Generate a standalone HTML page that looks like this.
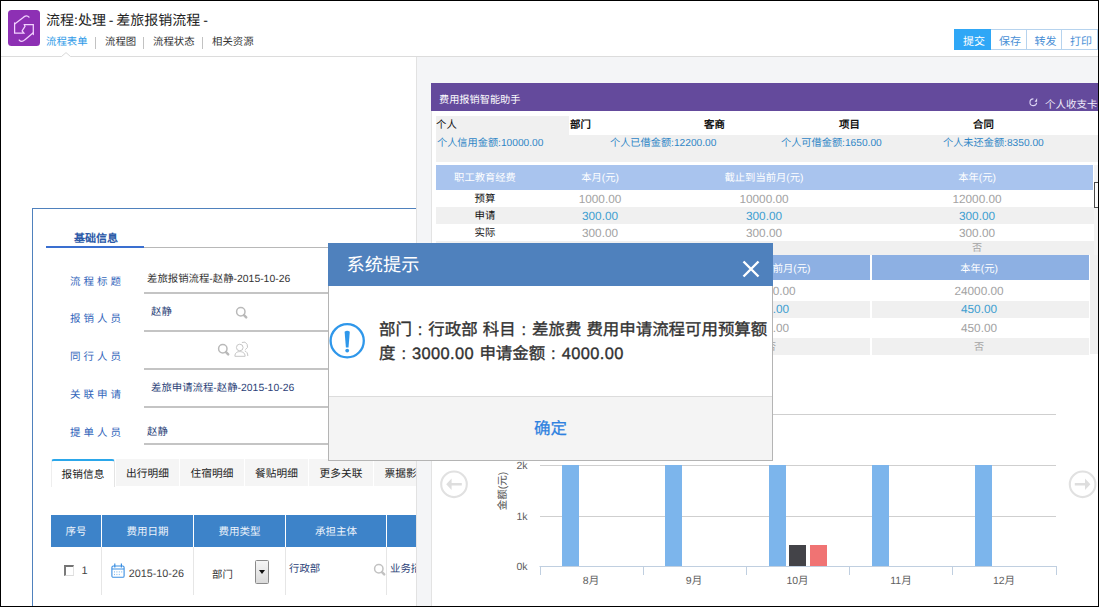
<!DOCTYPE html>
<html lang="zh-CN">
<head>
<meta charset="utf-8">
<title>流程:处理 - 差旅报销流程</title>
<style>
*{box-sizing:border-box;margin:0;padding:0}
html,body{width:1099px;height:607px;overflow:hidden;background:#fff}
body{font-family:"Liberation Sans",sans-serif;font-size:12px;color:#222;position:relative;text-rendering:geometricPrecision}
.fc{display:inline-block;width:1em;text-align:center}
.abs{position:absolute}
.t{position:absolute;white-space:nowrap;line-height:1}
#frame{position:absolute;left:0;top:0;width:1099px;height:607px;border:1px solid #000;z-index:100;pointer-events:none}
/* header */
#logo{left:8px;top:10px;width:32px;height:36px;background:#8d30b4;border-radius:3.5px}
#hline{left:1px;top:56px;width:1097px;height:1px;background:#dcdcdc}
.btn{position:absolute;top:29px;height:21px;border:1px solid #b6d3ee;border-left:none;background:#fff;color:#4a90d6;font-size:11px;line-height:24px;text-align:center;padding-left:3px}
/* right */
#rbg{left:417px;top:57px;width:681px;height:549px;background:#f4f5f7}
#rline{left:416px;top:57px;width:1px;height:549px;background:#e2e2e2}
#rpanel{left:431px;top:83px;width:667px;height:523px;background:#fff;border-left:1px solid #e3e3e3}
#purple{left:431px;top:83px;width:667px;height:28px;background:#644a9c}
.g{position:absolute;background:#f0f0f0}
.c{position:absolute;white-space:nowrap;line-height:1;transform:translateX(-50%)}
/* left */
#lpanel{left:32px;top:208px;width:400px;height:420px;border:1px solid #4f81bd;background:#fff}
.lab{position:absolute;left:70px;color:#3366bb;font-size:10.5px;letter-spacing:3px;white-space:nowrap;line-height:1}
.ul{position:absolute;left:144px;width:190px;height:2px;background:#c4c4c4}
.tab{position:absolute;top:459px;height:27px;background:#f5f5f5;font-size:10.7px;line-height:31px;text-align:center;color:#222}
.th{position:absolute;top:515px;height:32px;background:#3d83c9;color:#eef4fb;font-size:10.5px;line-height:34px;text-align:center}
.vs{position:absolute;top:547px;width:1px;height:48px;background:#e6e6e6}
.lk{font-size:10.2px;color:#2f86c6}
.h1{font-size:10.3px;color:#fff;margin-top:1.5px}
.rl{font-size:10.4px;color:#111;margin-top:1px}
.nm{font-size:11.8px;color:#a3a3a3;margin-top:1.2px}
.nm.b{color:#3f9fd0}
/* dialog */
#dlg{left:328px;top:243px;width:445px;height:218px;background:#fff;border:1px solid #b4b4b4;z-index:50}
#dtitle{left:-1px;top:-1px;width:445px;height:42.5px;background:#4f81bd}
#dfoot{left:0;top:152px;width:443px;height:64px;background:#f4f4f4;border-top:1px solid #dcdcdc}
</style>
</head>
<body>
<!-- header -->
<div class="abs" id="logo"><svg width="32" height="36" viewBox="0 0 32 36"><g fill="none" stroke="#f3d3ff" stroke-width="1.25" stroke-linejoin="miter" stroke-linecap="round">
<path d="M21 7.2C19.6 5.2 17 5.4 15.2 7.5L7 13.8"/>
<path d="M6.6 12.8V23.2H15.9L14.1 21L17 16.4L16.3 14.5H25.3V24.6"/>
<path d="M11.2 30C12.7 32 15.2 31.8 17 29.7L25.2 22.8"/>
</g></svg></div>
<div class="t" style="left:46px;top:12.5px;font-size:14px;color:#222;word-spacing:-1px">流程:处理 - 差旅报销流程 -</div>
<div class="t" style="left:46px;top:38.3px;font-size:10.4px;color:#2f9be8">流程表单</div>
<div class="t" style="left:105px;top:38.3px;font-size:10.4px;color:#333">流程图</div>
<div class="t" style="left:153px;top:38.3px;font-size:10.4px;color:#333">流程状态</div>
<div class="t" style="left:212px;top:38.3px;font-size:10.4px;color:#333">相关资源</div>
<div class="abs" style="left:95px;top:37px;width:1px;height:12px;background:#c2c2c2"></div>
<div class="abs" style="left:143px;top:37px;width:1px;height:12px;background:#c2c2c2"></div>
<div class="abs" style="left:202px;top:37px;width:1px;height:12px;background:#c2c2c2"></div>
<div class="abs" id="hline"></div>
<svg class="abs" style="left:60px;top:51px" width="12" height="7" viewBox="0 0 12 7"><path d="M1 5.5L6 1.3L11 5.5V7H1Z" fill="#fff"/><path d="M0.5 5.5H1.5L6 1.6L10.5 5.5H11.5" fill="none" stroke="#d9d9d9" stroke-width="1"/></svg>
<div class="btn" style="left:954px;width:37px;background:#2fa7f6;border-color:#2fa7f6;color:#fff;border-left:1px solid #2fa7f6">提交</div>
<div class="btn" style="left:991px;width:36px">保存</div>
<div class="btn" style="left:1027px;width:35px">转发</div>
<div class="btn" style="left:1062px;width:36px">打印</div>

<!-- right background -->
<div class="abs" id="rbg"></div>
<div class="abs" id="rline"></div>

<!-- left panel -->
<div class="abs" id="lpanel"></div>
<!-- section title -->
<div class="t" style="left:74px;top:233.5px;font-size:11px;font-weight:bold;color:#2c5aa8">基础信息</div>
<div class="abs" style="left:46px;top:247px;width:370px;height:1px;background:#b8b8b8"></div>
<div class="abs" style="left:46px;top:246px;width:98px;height:2px;background:#3a6fd0"></div>
<!-- form rows -->
<div class="lab" style="top:276.5px">流程标题</div>
<div class="t" style="left:147px;top:275px;font-size:10.4px;color:#333">差旅报销流程-赵静-2015-10-26</div>
<div class="ul" style="top:292px"></div>
<div class="lab" style="top:313.5px">报销人员</div>
<div class="t" style="left:151px;top:307.5px;font-size:10.4px;color:#2b3f78">赵静</div>
<svg class="abs" style="left:235px;top:305.5px" width="14" height="14" viewBox="0 0 14 14"><circle cx="5.8" cy="5.8" r="4.2" fill="none" stroke="#b9b9b9" stroke-width="1.5"/><path d="M9 9.2L11.2 11.3" stroke="#b9b9b9" stroke-width="2.5" stroke-linecap="round"/></svg>
<div class="ul" style="top:330px"></div>
<div class="lab" style="top:351.5px">同行人员</div>
<svg class="abs" style="left:217.1px;top:342.9px" width="14" height="14" viewBox="0 0 14 14"><circle cx="5.8" cy="5.8" r="4.2" fill="none" stroke="#b9b9b9" stroke-width="1.5"/><path d="M9 9.2L11.2 11.3" stroke="#b9b9b9" stroke-width="2.5" stroke-linecap="round"/></svg>
<svg class="abs" style="left:233px;top:340px" width="17" height="18" viewBox="0 0 17 18"><g fill="none" stroke="#c6c6c6" stroke-width="1"><path d="M8.9 2.5A3.6 3.6 0 0 1 12.3 9.6M11.8 10.9C13.6 11.6 14.8 13 14.8 16"/><circle cx="6.75" cy="7.5" r="3.3" fill="#fff"/><path d="M1.9 16.3C1.9 12.6 4.3 11.6 6.75 11.6C9.2 11.6 12.1 12.6 12.1 16.3Z" fill="#fff"/></g></svg>
<div class="ul" style="top:368px"></div>
<div class="lab" style="top:389.5px">关联申请</div>
<div class="t" style="left:151px;top:384px;font-size:10.4px;color:#2b3f78">差旅申请流程-赵静-2015-10-26</div>
<div class="ul" style="top:406px"></div>
<div class="lab" style="top:427.5px">提单人员</div>
<div class="t" style="left:147px;top:428px;font-size:10.4px;color:#2b3f78">赵静</div>
<div class="ul" style="top:443px"></div>
<!-- tabs -->
<div class="tab" style="left:51px;width:64px;top:459px;height:28px;background:#fff;border-top:2px solid #2ba7ea;border-radius:3px 3px 0 0;line-height:28px;border-left:1px solid #eee;border-right:1px solid #e4e4e4">报销信息</div>
<div class="tab" style="left:116px;width:63px">出行明细</div>
<div class="tab" style="left:180px;width:64px">住宿明细</div>
<div class="tab" style="left:245px;width:63px">餐贴明细</div>
<div class="tab" style="left:309px;width:64px">更多关联</div>
<div class="tab" style="left:374px;width:64px">票据影像</div>
<!-- table -->
<div class="th" style="left:51px;width:50px">序号</div>
<div class="th" style="left:102px;width:91px">费用日期</div>
<div class="th" style="left:194px;width:91px">费用类型</div>
<div class="th" style="left:286px;width:100px">承担主体</div>
<div class="th" style="left:387px;width:60px"></div>
<div class="vs" style="left:101px"></div><div class="vs" style="left:193px"></div><div class="vs" style="left:285px"></div><div class="vs" style="left:386px"></div>
<div class="abs" style="left:64px;top:565px;width:10px;height:11px;border-top:2px solid #737373;border-left:2px solid #7a7a7a;border-right:1px solid #e2e2e2;border-bottom:1px solid #dcdcdc;background:#fff"></div>
<div class="t" style="left:81.5px;top:566px;font-size:11px;color:#444">1</div>
<svg class="abs" style="left:110.5px;top:562.5px" width="14" height="15" viewBox="0 0 14 15"><rect x="0.9" y="3" width="12.2" height="11.3" rx="1.4" fill="#fff" stroke="#3b8fe2" stroke-width="1.1"/><path d="M0.9 6H13.1" stroke="#3b8fe2" stroke-width="1"/><path d="M3.8 0.5V4.4M10.4 0.5V4.4" stroke="#3b8fe2" stroke-width="1.2"/><g fill="#86bdf0"><rect x="3" y="8.3" width="1" height="1.2"/><rect x="5.4" y="8.3" width="1" height="1.2"/><rect x="7.8" y="8.3" width="1" height="1.2"/><rect x="10.2" y="8.3" width="1" height="1.2"/><rect x="3" y="10.9" width="1" height="1.2"/><rect x="5.4" y="10.9" width="1" height="1.2"/><rect x="7.8" y="10.9" width="1" height="1.2"/></g></svg>
<div class="t" style="left:128.7px;top:568.6px;font-size:10.8px;color:#444">2015-10-26</div>
<div class="t" style="left:212px;top:570.6px;font-size:10.4px;color:#333">部门</div>
<div class="abs" style="left:255px;top:560px;width:14px;height:24px;border:1px solid #8a8a8a;border-radius:1.5px;background:linear-gradient(#f5f5f5,#dadada)"></div>
<div class="abs" style="left:259px;top:570px;width:0;height:0;border-left:3px solid transparent;border-right:3px solid transparent;border-top:4px solid #111"></div>
<div class="t" style="left:289px;top:565px;font-size:10.4px;color:#2b3f78">行政部</div>
<svg class="abs" style="left:373px;top:563px" width="14" height="14" viewBox="0 0 14 14"><circle cx="5.8" cy="5.8" r="4.2" fill="none" stroke="#c2c2c2" stroke-width="1.5"/><path d="M9 9.2L11.2 11.3" stroke="#c2c2c2" stroke-width="2.5" stroke-linecap="round"/></svg>
<div class="t" style="left:390px;top:564.5px;font-size:10.4px;color:#2b3f78">业务招待</div>
<!-- cover strip right of left panel -->
<div class="abs" style="left:416px;top:57px;width:16px;height:549px;background:#f4f5f7;border-left:1px solid #e2e2e2"></div>

<!-- right panel -->
<div class="abs" id="rpanel"></div>
<div class="abs" id="purple"></div>
<div class="t" style="left:439px;top:95.5px;font-size:10.2px;color:#fff">费用报销智能助手</div>
<svg class="abs" style="left:1027.7px;top:97.4px" width="10.6" height="10.6" viewBox="0 0 11 11"><path d="M5.6 2A3.5 3.5 0 1 0 9 6" fill="none" stroke="#ddd5f5" stroke-width="1.15"/><path d="M6.9 4.9H9.5V1Z" fill="#e6e0f8"/></svg>
<div class="abs" style="left:1040px;top:96px;width:58px;height:15px;overflow:hidden"><div class="t" style="left:5px;top:4px;font-size:10.5px;color:#f2eefb">个人收支卡片</div></div>
<!-- type row -->
<div class="g" style="left:436px;top:116px;width:133px;height:19px"></div>
<div class="t" style="left:436px;top:120.5px;font-size:10.4px;color:#111">个人</div>
<div class="t" style="left:570px;top:120.5px;font-size:10.4px;color:#111;font-weight:bold">部门</div>
<div class="t" style="left:704px;top:120.5px;font-size:10.4px;color:#111;font-weight:bold">客商</div>
<div class="t" style="left:839px;top:120.5px;font-size:10.4px;color:#111;font-weight:bold">项目</div>
<div class="t" style="left:973px;top:120.5px;font-size:10.4px;color:#111;font-weight:bold">合同</div>
<div class="g" style="left:436px;top:135px;width:662px;height:27px"></div>
<div class="t lk" style="left:437px;top:138.7px">个人信用金额:10000.00</div>
<div class="t lk" style="left:610px;top:138.7px">个人已借金额:12200.00</div>
<div class="t lk" style="left:781px;top:138.7px">个人可借金额:1650.00</div>
<div class="t lk" style="left:943px;top:138.7px">个人未还金额:8350.00</div>
<!-- table 1 -->
<div class="abs" style="left:436px;top:165px;width:657px;height:25px;background:#a9c4ee"></div>
<div class="c h1" style="left:485px;top:172px">职工教育经费</div>
<div class="c h1" style="left:600px;top:172px">本月(元)</div>
<div class="c h1" style="left:764px;top:172px">截止到当前月(元)</div>
<div class="c h1" style="left:977px;top:172px">本年(元)</div>
<div class="g" style="left:436px;top:207px;width:658px;height:17px"></div>
<div class="g" style="left:436px;top:241px;width:658px;height:14px"></div>
<div class="c rl" style="left:485px;top:194px">预算</div>
<div class="c rl" style="left:485px;top:211px">申请</div>
<div class="c rl" style="left:485px;top:228px">实际</div>
<div class="c nm" style="left:600px;top:193px">1000.00</div>
<div class="c nm" style="left:764px;top:193px">10000.00</div>
<div class="c nm" style="left:977px;top:193px">12000.00</div>
<div class="c nm b" style="left:600px;top:210px">300.00</div>
<div class="c nm b" style="left:764px;top:210px">300.00</div>
<div class="c nm b" style="left:977px;top:210px">300.00</div>
<div class="c nm" style="left:600px;top:227px">300.00</div>
<div class="c nm" style="left:764px;top:227px">300.00</div>
<div class="c nm" style="left:977px;top:227px">300.00</div>
<div class="c nm" style="left:977px;top:243px;font-size:10px">否</div>
<div class="abs" style="left:1094px;top:165px;width:5px;height:90px;background:#f3f3f3"></div>
<div class="abs" style="left:1094px;top:182px;width:6px;height:26px;border:1px solid #4a4a4a;background:#fafafa"></div>
<!-- table 2 -->
<div class="abs" style="left:672px;top:255px;width:198px;height:25px;background:#8db0e3"></div>
<div class="abs" style="left:872px;top:255px;width:217px;height:25px;background:#8db0e3"></div>
<div class="g" style="left:1090px;top:255px;width:8px;height:99px"></div>
<div class="c h1" style="left:771px;top:263px">截止到当前月(元)</div>
<div class="c h1" style="left:979px;top:263px">本年(元)</div>
<div class="g" style="left:672px;top:301px;width:198px;height:17px"></div>
<div class="g" style="left:872px;top:301px;width:217px;height:17px"></div>
<div class="g" style="left:672px;top:338px;width:198px;height:17px"></div>
<div class="g" style="left:872px;top:338px;width:217px;height:17px"></div>
<div class="c nm" style="left:771px;top:285px">20000.00</div>
<div class="c nm" style="left:979px;top:285px">24000.00</div>
<div class="c nm b" style="left:771px;top:303px">450.00</div>
<div class="c nm b" style="left:979px;top:303px">450.00</div>
<div class="c nm" style="left:771px;top:322px">450.00</div>
<div class="c nm" style="left:979px;top:322px">450.00</div>
<div class="c nm" style="left:771px;top:341.6px;font-size:10px">否</div>
<div class="c nm" style="left:979px;top:341.6px;font-size:10px">否</div>

<!-- chart -->
<svg class="abs" style="left:431px;top:400px" width="668" height="207" viewBox="431 400 668 207">
<path d="M540 414.5H1056" stroke="#cfcfcf" stroke-width="1"/>
<path d="M540 465.5H1056" stroke="#cfcfcf" stroke-width="1"/>
<path d="M540 516.5H1056" stroke="#cfcfcf" stroke-width="1"/>
<rect x="562" y="465" width="17" height="101.5" fill="#7cb5ec"/>
<rect x="665" y="465" width="17" height="101.5" fill="#7cb5ec"/>
<rect x="769" y="465" width="17" height="101.5" fill="#7cb5ec"/>
<rect x="872" y="465" width="17" height="101.5" fill="#7cb5ec"/>
<rect x="975" y="465" width="17" height="101.5" fill="#7cb5ec"/>
<rect x="789" y="545" width="17" height="21.5" fill="#434348"/>
<rect x="810" y="545" width="17" height="21.5" fill="#f07373"/>
<path d="M539.5 566.5H1056" stroke="#c0cfe0" stroke-width="1"/>
<path d="M540.5 566V575" stroke="#c0cfe0" stroke-width="1"/>
<path d="M643.5 566V575" stroke="#c0cfe0" stroke-width="1"/>
<path d="M746.5 566V575" stroke="#c0cfe0" stroke-width="1"/>
<path d="M849.5 566V575" stroke="#c0cfe0" stroke-width="1"/>
<path d="M952.5 566V575" stroke="#c0cfe0" stroke-width="1"/>
<path d="M1056.5 566V575" stroke="#c0cfe0" stroke-width="1"/>
<g font-family="Liberation Sans, sans-serif" font-size="10.5" fill="#606060">
<text x="527.5" y="469" text-anchor="end">2k</text><text x="527.5" y="520" text-anchor="end">1k</text><text x="527.5" y="570" text-anchor="end">0k</text>
<text x="591" y="584" text-anchor="middle">8月</text><text x="694" y="584" text-anchor="middle">9月</text><text x="797.5" y="584" text-anchor="middle">10月</text><text x="901" y="584" text-anchor="middle">11月</text><text x="1004" y="584" text-anchor="middle">12月</text>
<text transform="translate(505.5 491) rotate(-90)" text-anchor="middle" font-size="10.5" fill="#555">金额(元)</text>
</g>
<g fill="none" stroke="#e1e1e1" stroke-width="2.1">
<circle cx="454" cy="484.3" r="12.8"/><circle cx="1082.6" cy="484.3" r="12.8"/></g>
<g fill="#dedede"><path d="M446.2 484.3L451.6 478.6V483H461.8V485.6H451.6V490Z"/><path d="M1090.4 484.3L1085 478.6V483H1074.8V485.6H1085V490Z"/></g>
</svg>
<!-- dialog -->
<div class="abs" id="dlg">
  <div class="abs" id="dtitle"></div>
  <div class="t" style="left:17.6px;top:12.4px;font-size:18.2px;color:#fff">系统提示</div>
  <svg class="abs" style="left:413px;top:16px" width="18" height="18" viewBox="0 0 18 18"><path d="M1.5 1.5L16.5 16.5M16.5 1.5L1.5 16.5" stroke="#fff" stroke-width="2.4"/></svg>
  <svg class="abs" style="left:0px;top:78px" width="38" height="38" viewBox="0 0 38 38"><circle cx="18.2" cy="18.8" r="16.6" fill="#fff" stroke="#2f97ea" stroke-width="2.3"/><path d="M15.6 9.8Q18.2 7.6 20.8 9.8L19.5 25.4H16.9Z" fill="#2f97ea"/><circle cx="18.2" cy="28.6" r="1.9" fill="#2f97ea"/></svg>
  <div class="t" style="left:50px;top:78px;font-size:16.45px;color:#333;word-spacing:0.5px;-webkit-text-stroke:0.35px #333">部门<span class="fc">:</span>行政部 科目<span class="fc">:</span>差旅费 费用申请流程可用预算额</div>
  <div class="t" style="left:50px;top:101.5px;font-size:16.45px;color:#333;word-spacing:0.5px;-webkit-text-stroke:0.35px #333">度<span class="fc">:</span><span style="letter-spacing:.38px">3000.00 </span>申请金额<span class="fc">:</span><span style="letter-spacing:.38px">4000.00</span></div>
  <div class="abs" id="dfoot"></div>
  <div class="c" style="left:221.5px;top:177.3px;font-size:16.5px;color:#2f82e0;-webkit-text-stroke:0.25px #2f82e0">确定</div>
</div>
<div id="frame"></div>
</body>
</html>
